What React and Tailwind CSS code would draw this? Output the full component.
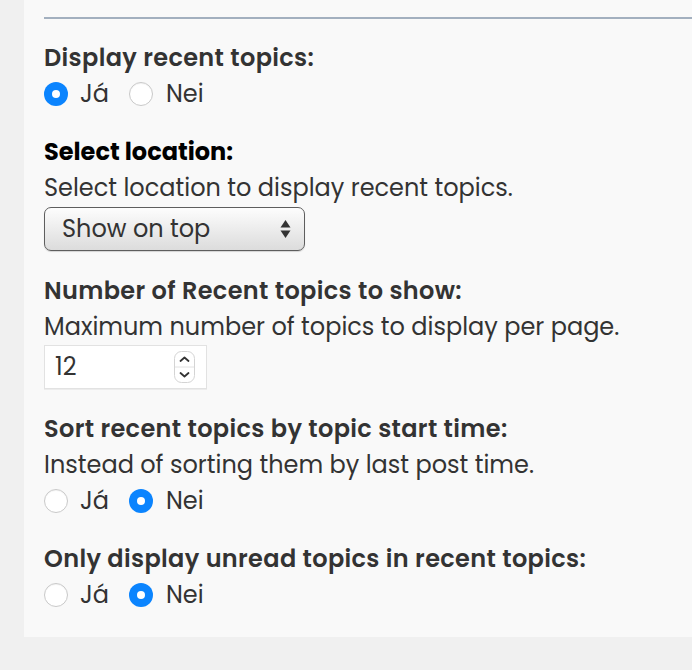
import React from "react";

function Radio({ checked }) {
  if (checked) {
    return (
      <span className="flex h-[24px] w-[24px] shrink-0 items-center justify-center rounded-full bg-[#0b84fe]">
        <span className="h-[8px] w-[8px] rounded-full bg-white" />
      </span>
    );
  }
  return (
    <span className="h-[24px] w-[24px] shrink-0 rounded-full border border-[#c9c9c9] bg-white shadow-[inset_0_1px_1px_rgba(0,0,0,0.05)]" />
  );
}

function YesNo({ yes }) {
  return (
    <div className="flex h-[36px] items-center">
      <Radio checked={yes} />
      <span className="ml-[12px]">Já</span>
      <span className="ml-[20px]" />
      <Radio checked={!yes} />
      <span className="ml-[13px]">Nei</span>
    </div>
  );
}

function Heading({ children, dark }) {
  return (
    <div
      className={
        dark
          ? "font-bold text-black"
          : "font-semibold tracking-[0.35px] text-[#333]"
      }
    >
      {children}
    </div>
  );
}

export default function App() {
  return (
    <div
      className="min-h-screen bg-[#f0f0f0] text-[24px] leading-[36px] text-[#333]"
      style={{ fontFamily: "Poppins, Inter, 'Noto Sans', sans-serif" }}
    >
      <div className="ml-[24px] bg-[#f9f9f9] pb-[24px] pl-[20px] pt-[17px]">
        <div className="h-[2px] bg-[#a3b0bf]" />
        <div className="mt-[21px] flex flex-col gap-[22px]">
          <div>
            <Heading>Display recent topics:</Heading>
            <YesNo yes />
          </div>
          <div>
            <Heading dark>Select location:</Heading>
            <div>Select location to display recent topics.</div>
            <div className="mt-[1px] flex h-[44px] w-[261px] items-center justify-between rounded-[7px] border-[1.5px] border-[#5e5e5e] bg-gradient-to-b from-[#fdfdfd] to-[#dcdcdc] pl-[17px] pr-[13px] shadow-[0_1px_1px_rgba(0,0,0,0.15)]">
              <span>Show on top</span>
              <svg width="11" height="20" viewBox="0 0 11 20">
                <path d="M5.5 1 L10.5 8.5 L0.5 8.5 Z" fill="#333" />
                <path d="M5.5 19 L10.5 11.5 L0.5 11.5 Z" fill="#333" />
              </svg>
            </div>
          </div>
          <div>
            <Heading>Number of Recent topics to show:</Heading>
            <div>Maximum number of topics to display per page.</div>
            <div className="flex h-[44px] w-[163px] items-center justify-between border border-[#e2e2e2] bg-white pl-[10px] pr-[11px] shadow-[0_1px_0_rgba(0,0,0,0.05)]">
              <span>12</span>
              <svg width="21" height="32" viewBox="0 0 21 32">
                <rect x="0.5" y="0.5" width="20" height="31" rx="7" fill="#fff" stroke="#d4d4d4" />
                <line x1="1" y1="16" x2="20" y2="16" stroke="#e2e2e2" />
                <path d="M6.5 10 L10.5 6.5 L14.5 10" fill="none" stroke="#333" strokeWidth="1.8" strokeLinecap="round" strokeLinejoin="round" />
                <path d="M6.5 22 L10.5 25.5 L14.5 22" fill="none" stroke="#333" strokeWidth="1.8" strokeLinecap="round" strokeLinejoin="round" />
              </svg>
            </div>
          </div>
          <div>
            <Heading>Sort recent topics by topic start time:</Heading>
            <div>Instead of sorting them by last post time.</div>
            <YesNo yes={false} />
          </div>
          <div>
            <Heading>Only display unread topics in recent topics:</Heading>
            <YesNo yes={false} />
          </div>
        </div>
      </div>
    </div>
  );
}
